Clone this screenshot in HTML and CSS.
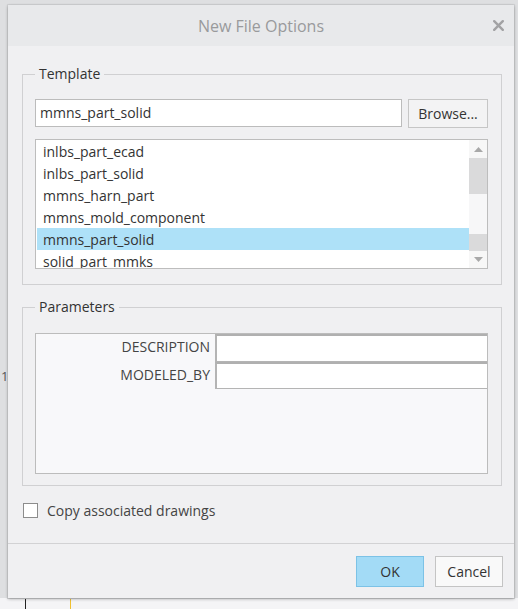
FILE: index.html
```html
<!DOCTYPE html>
<html>
<head>
<meta charset="utf-8">
<link rel="stylesheet" href="styles.css">
</head>
<body>
<div class="screen">
  <div class="backdrop-num">1</div>
  <div class="dialog">
    <div class="titlebar">
      <span class="title">New File Options</span>
      <span class="close"><svg width="11" height="11" viewBox="0 0 11 11"><path d="M1.2 1.2 L9.8 9.8 M9.8 1.2 L1.2 9.8" stroke="#a2a2a4" stroke-width="2.4" stroke-linecap="round"/></svg></span>
    </div>
    <div class="content">
      <fieldset class="group template">
        <legend>Template</legend>
        <div class="row-input">
          <div class="textbox">mmns_part_solid</div>
          <div class="btn browse">Browse...</div>
        </div>
        <div class="listbox">
          <div class="items">
            <div class="item">inlbs_part_ecad</div>
            <div class="item">inlbs_part_solid</div>
            <div class="item">mmns_harn_part</div>
            <div class="item">mmns_mold_component</div>
            <div class="item selected">mmns_part_solid</div>
            <div class="item">solid_part_mmks</div>
          </div>
          <div class="scrollbar">
            <div class="arrow up"><svg width="9" height="5" viewBox="0 0 9 5"><path d="M0 5 L4.5 0 L9 5 Z" fill="#a8a8a8"/></svg></div>
            <div class="thumb"></div>
            <div class="track"></div>
            <div class="thumb2"></div>
            <div class="arrow down"><svg width="9" height="5" viewBox="0 0 9 5"><path d="M0 0 L4.5 5 L9 0 Z" fill="#a8a8a8"/></svg></div>
          </div>
        </div>
      </fieldset>

      <fieldset class="group params">
        <legend>Parameters</legend>
        <div class="paramtable">
          <div class="prow">
            <div class="plabel">DESCRIPTION</div>
            <div class="pinput"></div>
          </div>
          <div class="prow">
            <div class="plabel">MODELED_BY</div>
            <div class="pinput"></div>
          </div>
        </div>
      </fieldset>

      <div class="checkrow">
        <span class="checkbox"></span>
        <span class="checklabel">Copy associated drawings</span>
      </div>
    </div>
    <div class="footer">
      <div class="btn ok">OK</div>
      <div class="btn cancel">Cancel</div>
    </div>
  </div>
  <div class="canvas">
    <span class="vline dark"></span>
    <span class="vline yellow"></span>
  </div>
</div>
</body>
</html>
```

FILE: styles.css
```css
html, body {
  margin: 0;
  padding: 0;
}
body {
  width: 518px;
  height: 609px;
  overflow: hidden;
  background: #dedfe1;
  font-family: "Open Sans", "Noto Sans", sans-serif;
  color: #333;
}
.screen {
  position: relative;
  width: 518px;
  height: 609px;
  padding: 5px 0 0 8px;
  box-sizing: border-box;
}
.backdrop-num {
  position: absolute;
  left: 1px;
  top: 367px;
  font-size: 13px;
  color: #555;
}
.dialog {
  position: relative;
  z-index: 2;
  width: 506px;
  height: 593px;
  background: #f0f0f2;
  box-shadow: 0 1px 3px rgba(0,0,0,0.3), 0 0 0 1px #d2d3d5;
  display: flex;
  flex-direction: column;
}
.titlebar {
  height: 41px;
  background: #e8e9eb;
  display: flex;
  align-items: center;
  justify-content: center;
  position: relative;
  flex: none;
}
.title {
  font-size: 16px;
  color: #999a9c;
  margin-top: 1px;
}
.close {
  position: absolute;
  right: 10px;
  top: 15px;
  width: 11px;
  height: 11px;
  display: flex;
}
.content {
  padding: 19px 12px 0 14px;
  flex: 1;
}
.group {
  margin: 0;
  border: 1px solid #d0d0d2;
  padding: 0 13px 0 12px;
}
.group legend {
  padding: 0 4px;
  font-size: 14px;
  line-height: 18px;
  color: #333;
}
.template {
  height: 202px;
  padding-top: 16px;
}
.row-input {
  display: flex;
  gap: 6px;
  height: 28px;
}
.textbox {
  flex: 1;
  border: 1px solid #bcbcbc;
  background: #fff;
  font-size: 14px;
  line-height: 26px;
  padding-left: 4px;
  color: #333;
}
.btn {
  box-sizing: border-box;
  border: 1px solid #c6c6c6;
  background: #f7f7f7;
  font-size: 14px;
  display: flex;
  align-items: center;
  justify-content: center;
  color: #333;
}
.browse {
  width: 80px;
  height: 29px;
  background: #f3f3f4;
}
.listbox {
  margin-top: 12px;
  height: 130px;
  box-sizing: border-box;
  border: 1px solid #bdbdbd;
  background: #fff;
  display: flex;
  overflow: hidden;
}
.items {
  flex: 1;
  padding-left: 1px;
}
.item {
  height: 22px;
  line-height: 23px;
  font-size: 14px;
  padding-left: 6px;
  color: #333;
}
.item.selected {
  background: #aee1f8;
}
.scrollbar {
  width: 18px;
  display: flex;
  flex-direction: column;
  background: #f5f5f6;
}
.arrow {
  height: 18px;
  display: flex;
  align-items: center;
  justify-content: center;
  background: #f7f7f7;
}
.arrow.down {
  height: 17px;
}
.thumb {
  height: 36px;
  background: #dadadb;
}
.track {
  height: 40px;
  background: #f7f7f8;
}
.thumb2 {
  height: 17px;
  background: #dadadb;
}
.params {
  margin-top: 13px;
  height: 188px;
  padding-top: 17px;
  box-sizing: border-box;
}
.paramtable {
  height: 141px;
  box-sizing: border-box;
  border: 1px solid #bcbcbc;
  background: #f8f8fa;
}
.prow {
  display: flex;
  height: 28px;
}
.prow + .prow {
  height: 27px;
}
.plabel {
  width: 179px;
  box-sizing: border-box;
  text-align: right;
  padding-right: 5px;
  font-size: 14px;
  line-height: 26px;
  color: #444;
}
.pinput {
  flex: 1;
  background: #fff;
  border: 1px solid #b4b4b4;
  border-width: 1px 0 1px 2px;
  border-top: 2px solid #b0b0b0;
}
.checkrow {
  margin-top: 15px;
  display: flex;
  align-items: center;
  margin-left: 1px;
  gap: 9px;
}
.checkbox {
  width: 13px;
  height: 13px;
  border: 1px solid #8c8c8c;
  background: #fff;
}
.checklabel {
  font-size: 14px;
  color: #444;
}
.footer {
  border-top: 1px solid #d2d2d4;
  height: 55px;
  flex: none;
  display: flex;
  justify-content: flex-end;
  align-items: flex-start;
  gap: 11px;
  padding: 12px 11px 0 0;
  box-sizing: border-box;
}
.ok {
  width: 68px;
  height: 31px;
  background: #a3dbf6;
  border-color: #7cc2e6;
  font-size: 14px;
}
.cancel {
  width: 68px;
  height: 31px;
  background: #f9f9f9;
  border-color: #c4c4c4;
  font-size: 14px;
}
.canvas {
  position: absolute;
  left: 0;
  top: 598px;
  width: 518px;
  height: 11px;
  background: #f4f4f6;
  z-index: 1;
}
.vline {
  position: absolute;
  top: 0;
  width: 1px;
  height: 11px;
}
.vline.dark { left: 25px; background: #222; }
.vline.yellow { left: 70px; background: #f0c030; }
```
